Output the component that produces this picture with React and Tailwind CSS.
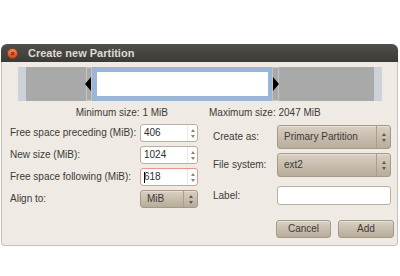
import React from "react";

function Spin({ value, focused }) {
  return (
    <div
      className={`w-[58px] h-[18px] bg-white rounded-[3px] border flex items-center ${
        focused ? "border-[#e19a93]" : "border-[#b9b0a3]"
      }`}
    >
      <div className="flex-1 pl-[3px] flex items-center text-[#2e2d2a]">
        {focused && <span className="w-px h-[11px] bg-black -mr-px" />}
        <span>{value}</span>
      </div>
      <div className="w-[10px] h-full flex flex-col items-center justify-center gap-[3px] border-l border-[#ece8e2]">
        <span className="w-0 h-0 border-l-[2.5px] border-r-[2.5px] border-b-[3px] border-l-transparent border-r-transparent border-b-[#8a857d]" />
        <span className="w-0 h-0 border-l-[2.5px] border-r-[2.5px] border-t-[3px] border-l-transparent border-r-transparent border-t-[#8a857d]" />
      </div>
    </div>
  );
}

function Combo({ value, className }) {
  return (
    <div
      className={`rounded-[3px] border border-[#a59a89] bg-gradient-to-b from-[#d9d0c3] to-[#b8ac9a] flex items-center text-[#3c3b37] shadow-[inset_0_1px_0_rgba(255,255,255,0.35)] ${className}`}
    >
      <div className="flex-1 pl-[6px]">{value}</div>
      <div className="w-[14px] h-full flex flex-col items-center justify-center gap-[3px] border-l border-[#a99e8d]">
        <span className="w-0 h-0 border-l-[2.5px] border-r-[2.5px] border-b-[3px] border-l-transparent border-r-transparent border-b-[#5e5850]" />
        <span className="w-0 h-0 border-l-[2.5px] border-r-[2.5px] border-t-[3px] border-l-transparent border-r-transparent border-t-[#5e5850]" />
      </div>
    </div>
  );
}

function Button({ children, className }) {
  return (
    <div
      className={`h-[18px] rounded-[3px] border border-[#a59a89] bg-gradient-to-b from-[#d9d0c3] to-[#b8ac9a] flex items-center justify-center text-[#3c3b37] shadow-[inset_0_1px_0_rgba(255,255,255,0.35)] ${className}`}
    >
      {children}
    </div>
  );
}

export default function App() {
  return (
    <div
      className="w-[400px] h-[276px] bg-white pt-[44px] pl-[1px] text-[10px] leading-[12px] text-[#3c3b37]"
      style={{ fontFamily: '"Liberation Sans", Arial, sans-serif' }}
    >
      <div className="w-[397px]">
        {/* Title bar */}
        <div className="h-[18px] rounded-t-[6px] bg-gradient-to-b from-[#504f4a] to-[#3c3b37] flex items-center pl-[6px]">
          <div className="w-[11px] h-[11px] rounded-full bg-gradient-to-b from-[#f3895a] to-[#d8481a] border border-[#9c3a17] flex items-center justify-center">
            <span className="text-[7px] leading-[7px] text-[#5a2410] font-bold">×</span>
          </div>
          <span className="ml-[10px] text-[11px] font-bold text-[#dfdbd2]">Create new Partition</span>
        </div>
        {/* Body */}
        <div className="h-[184px] bg-[#efeae4] border-l border-r border-b border-[#c9c0b3] rounded-b-[4px] flex flex-col">
          {/* partition bar */}
          <div className="mt-[5px] ml-[16px] w-[364px] h-[34px] bg-[#cdd1d9] px-[8px]">
            <div className="h-full bg-[#a9a9a9] flex">
              <div className="w-[60px]" />
              <div className="w-[6px] h-full border border-[#c4c4c4] flex items-center justify-end">
                <span className="w-0 h-0 border-t-[7px] border-b-[7px] border-r-[6px] border-t-transparent border-b-transparent border-r-black" />
              </div>
              <div className="w-[180px] h-full bg-[#9ab5d5] pl-[5px] pr-[4px] py-[5px]">
                <div className="w-full h-full bg-white" />
              </div>
              <div className="w-[7px] h-full border border-[#c4c4c4] flex items-center justify-start">
                <span className="w-0 h-0 border-t-[7px] border-b-[7px] border-l-[6px] border-t-transparent border-b-transparent border-l-black" />
              </div>
            </div>
          </div>
          {/* size labels */}
          <div className="mt-[6px] flex">
            <div className="w-[206px] pr-[40px] text-right">Minimum size: 1 MiB</div>
            <div className="pl-[1px]">Maximum size: 2047 MiB</div>
          </div>
          {/* main grid */}
          <div className="mt-[5px] flex">
            <div className="ml-[8px] w-[188px] flex flex-col gap-[4px]">
              <div className="h-[18px] flex items-center">
                <span className="flex-1">Free space preceding (MiB):</span>
                <Spin value="406" />
              </div>
              <div className="h-[18px] flex items-center">
                <span className="flex-1">New size (MiB):</span>
                <Spin value="1024" />
              </div>
              <div className="h-[18px] flex items-center">
                <span className="flex-1">Free space following (MiB):</span>
                <Spin value="618" focused />
              </div>
              <div className="h-[18px] flex items-center">
                <span className="flex-1">Align to:</span>
                <Combo value="MiB" className="w-[58px] h-[18px]" />
              </div>
            </div>
            <div className="ml-[15px] mt-[1px] w-[182px] flex flex-col">
              <div className="h-[24px] flex items-center">
                <span className="w-[64px]">Create as:</span>
                <Combo value="Primary Partition" className="w-[114px] h-[24px]" />
              </div>
              <div className="mt-[4px] h-[24px] flex items-center">
                <span className="w-[64px]">File system:</span>
                <Combo value="ext2" className="w-[114px] h-[24px]" />
              </div>
              <div className="mt-[9px] h-[19px] flex items-center">
                <span className="w-[64px]">Label:</span>
                <div className="w-[114px] h-[19px] bg-white rounded-[3px] border border-[#b9b0a3]" />
              </div>
              <div className="mt-[15px] flex pl-[63px] gap-[7px]">
                <Button className="w-[55px]">Cancel</Button>
                <Button className="w-[56px]">Add</Button>
              </div>
            </div>
          </div>
        </div>
      </div>
    </div>
  );
}
